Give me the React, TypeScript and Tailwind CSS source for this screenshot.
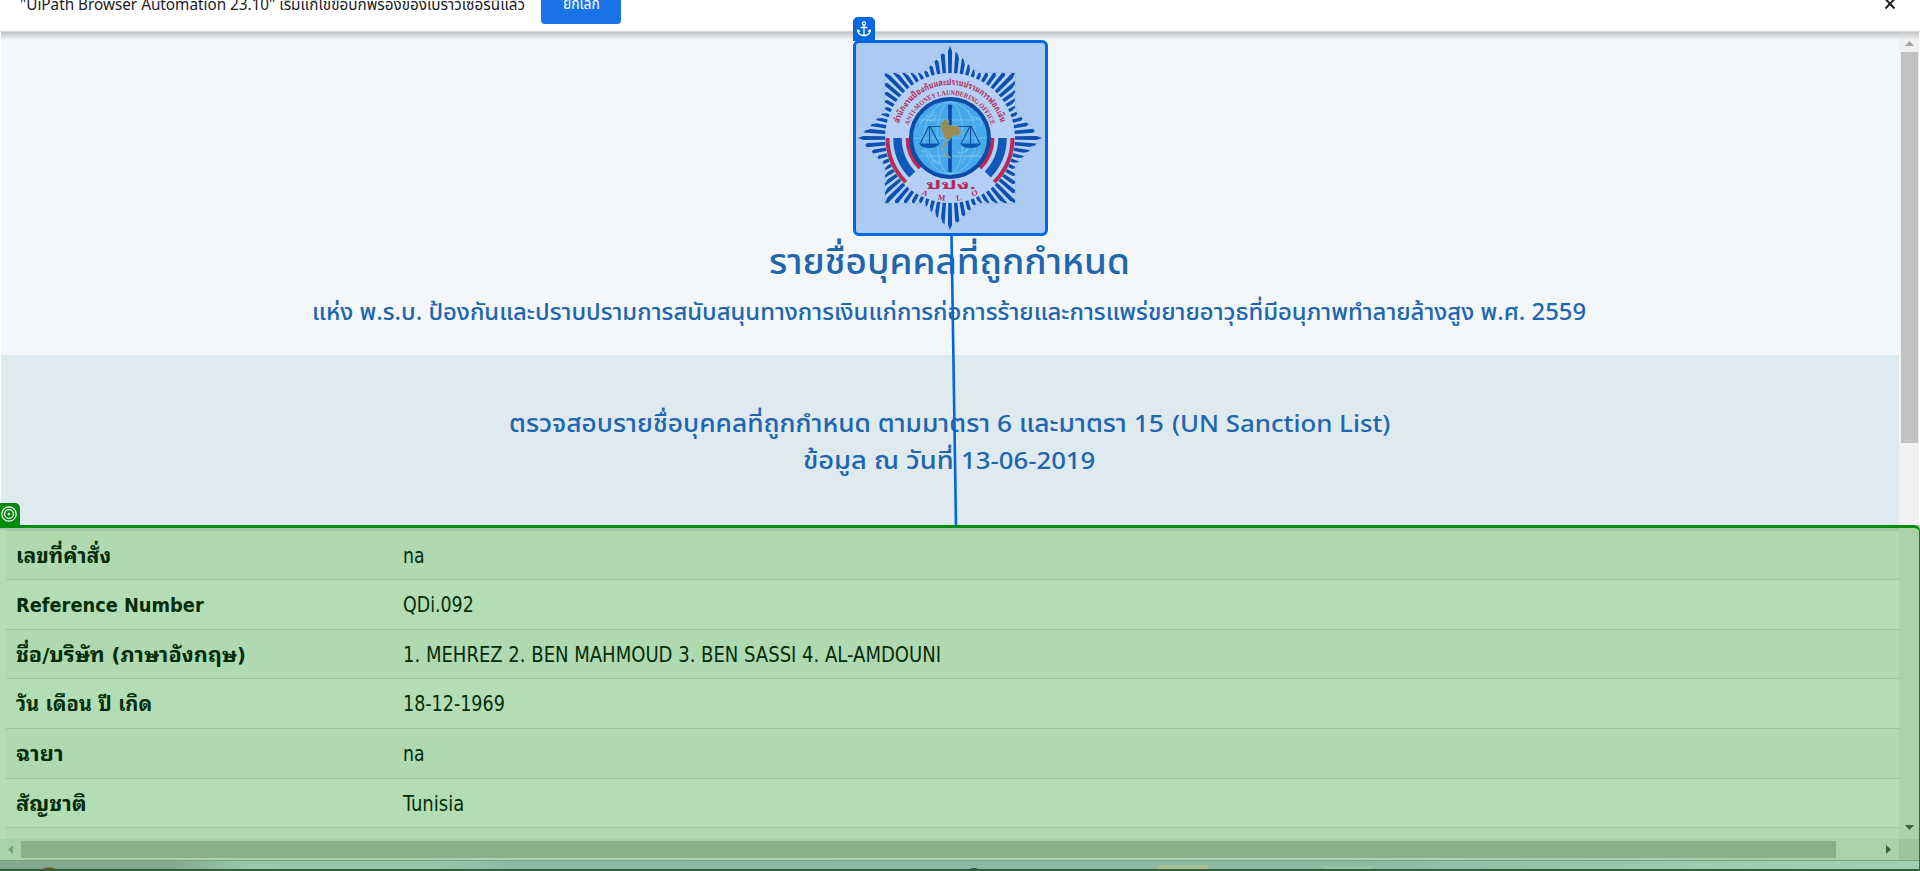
import { useLayoutEffect, useRef, useState } from "react";
import type { ReactNode } from "react";

/* Single line of text stretched horizontally to a known width. */
function Fit({ width, className = "", children }: { width: number; className?: string; children: ReactNode }) {
  const ref = useRef<HTMLSpanElement>(null);
  const [scale, setScale] = useState(1);
  useLayoutEffect(() => {
    if (ref.current) setScale(width / ref.current.offsetWidth);
  }, [width]);
  return (
    <span className={`block text-left whitespace-nowrap ${className}`} style={{ width }}>
      <span ref={ref} className="inline-block origin-left" style={{ transform: `scaleX(${scale})` }}>
        {children}
      </span>
    </span>
  );
}

const polar = (r: number, deg: number) => {
  const a = (deg * Math.PI) / 180;
  return `${(r * Math.cos(a)).toFixed(2)} ${(r * Math.sin(a)).toFixed(2)}`;
};

/* Outer edge of the star: a square laid over a diamond. */
const envelope = (deg: number) => {
  const c = Math.abs(Math.cos((deg * Math.PI) / 180));
  const s = Math.abs(Math.sin((deg * Math.PI) / 180));
  return Math.max(65 / Math.max(c, s), 92 / (c + s));
};

const rays = Array.from({ length: 72 }, (_, i) => {
  const a = i * 5;
  const axis = a % 90 === 0;
  const left = polar(envelope(a - 1.4) - (axis ? 3 : 0), a - 1.4);
  const right = polar(envelope(a + 1.4) - 3, a + 1.4);
  return `M${polar(63, a - 1.5)}L${left}L${polar(envelope(a), a)}L${right}L${polar(63, a + 1.5)}Z`;
}).join("");

const halo = Array.from({ length: 72 }, (_, i) => polar(envelope(i * 5) + 0.5, i * 5)).join("L");

const arc = (r: number, from: number, to: number) =>
  `M${polar(r, from)}A${r} ${r} 0 0 ${to > from ? 1 : 0} ${polar(r, to)}`;

function Emblem() {
  return (
    <svg viewBox="-97 -98 194 196" className="h-[196px] w-[194px] shrink-0">
      <path d={`M${halo}Z`} fill="#b5d1f5" stroke="#8fb2e4" strokeWidth="0.6" />
      <path d={rays} fill="#0d50b0" />
      <circle r="65" fill="#b4d0f6" />
      {[0, 1].map((s) => (
        <g key={s} transform={s ? "scale(-1 1)" : undefined} fill="none">
          <path d={arc(62.5, 180, 135)} stroke="#b92a56" strokeWidth="4" />
          <path d={arc(52.5, 180, 136)} stroke="#0f57b8" strokeWidth="8.5" />
          <path d={arc(42.5, 180, 135)} stroke="#b92a56" strokeWidth="4" />
        </g>
      ))}
      <circle r="39" fill="#46a9ea" stroke="#0e4ba6" strokeWidth="4" />
      <g fill="none" stroke="#79c6f3" strokeWidth="0.8">
        <ellipse rx="13" ry="36" />
        <ellipse rx="26" ry="36" />
        <path d="M-36 0H36M-31 -18H31M-31 18H31" />
        <path d="M-30 -14q5 -8 9 -4t8 -7M18 -28q2 8 8 8t5 9M-28 14q6 -4 9 4t10 8M12 25q4 -9 10 -7t8 -8M-24 -22q6 2 8 -4M8 14q6 2 10 -3M-18 24q4 -4 8 2" strokeWidth="1.4" strokeDasharray="2 1" />
      </g>
      <path d="M0 -31V34" stroke="#0e4ba6" strokeWidth="3.6" />
      <circle cy="-31" r="2.4" fill="#0e4ba6" />
      <path d="M-21 -11.500H21M-21 -12L-30 6M-20 -12L-11 6M20 -12L11 6M21 -12L30 6M-20.500 -12V6M20.500 -12V6" stroke="#12529f" strokeWidth="1.100" fill="none" />
      <path d="M-31 5.500H-10Q-13 10 -20.500 10T-31 5.500ZM31 5.500H10Q13 10 20.500 10T31 5.500Z" fill="#0e55ae" />
      <path d="M-9 -15L-5 -19L-1 -17L-2 -12L4 -13L9 -11L11 -5L8 -2L2 -2L-1 3L-4 1L-4 8L-7 10L-6 14L-2 17L1 20L-3 19L-7 14L-8 9L-5 3L-7 -4L-9 -9Z" fill="#988b55" stroke="#7fb4c8" strokeWidth="0.6" />
      <path id="arcThai" d={arc(53, 196, 345)} fill="none" />
      <path id="arcLatin" d={arc(43, 197, 344)} fill="none" />
      <path id="arcBase" d={arc(63, 117, 60)} fill="none" />
      <g fill="#b92a56" fontWeight="bold">
        <text fontSize="8.500" fontFamily="'Noto Sans Thai Looped', Loma, 'Noto Sans Thai', 'Liberation Sans', sans-serif">
          <textPath href="#arcThai" textLength="136" lengthAdjust="spacingAndGlyphs">สำนักงานป้องกันและปราบปรามการฟอกเงิน</textPath>
        </text>
        <text fontSize="7" fontFamily="'Liberation Serif', serif">
          <textPath href="#arcLatin" textLength="109" lengthAdjust="spacingAndGlyphs">ANTI-MONEY LAUNDERING OFFICE</textPath>
        </text>
        <text x="-24" y="51" fontSize="11.500" textLength="50" lengthAdjust="spacingAndGlyphs" fontFamily="'Noto Sans Thai Looped', Loma, 'Noto Sans Thai', 'Liberation Sans', sans-serif">ปปง.</text>
        <text fontSize="8" fontFamily="'Liberation Serif', serif">
          <textPath href="#arcBase" textLength="59" lengthAdjust="spacing">AMLO</textPath>
        </text>
      </g>
    </svg>
  );
}

const rows = [
  { label: "เลขที่คำสั่ง", lw: 95, value: "na", vw: 22, h: "h-[49px]" },
  { label: "Reference Number", lw: 188, value: "QDi.092", vw: 71, h: "h-[50px]" },
  { label: "ชื่อ/บริษัท (ภาษาอังกฤษ)", lw: 230, value: "1. MEHREZ 2. BEN MAHMOUD 3. BEN SASSI 4. AL-AMDOUNI", vw: 538, h: "h-[49px]" },
  { label: "วัน เดือน ปี เกิด", lw: 136, value: "18-12-1969", vw: 102, h: "h-[50px]" },
  { label: "ฉายา", lw: 47, value: "na", vw: 22, h: "h-[50px]" },
  { label: "สัญชาติ", lw: 71, value: "Tunisia", vw: 61, h: "h-[49px]" },
];

export default function App() {
  return (
    <div className="relative flex h-[871px] w-[1920px] flex-col overflow-hidden bg-white font-['Noto_Sans_Thai','Noto_Sans','Liberation_Sans',sans-serif]">
      <header className="flex h-[31px] shrink-0 items-start overflow-hidden pl-5 text-[#202124]">
        <div className="-mt-[7px] h-6 text-base leading-6">
          <Fit width={505}>"UiPath Browser Automation 23.10" เริ่มแก้ไขข้อบกพร่องของเบราว์เซอร์นี้แล้ว</Fit>
        </div>
        <div className="-mt-2 ml-4 flex h-8 w-20 justify-center rounded bg-[#1a73e8] text-[15px] leading-[26px] text-white">
          <Fit width={37}>ยกเลิก</Fit>
        </div>
        <svg viewBox="0 0 10 12" className="-mt-0.5 mr-[25px] ml-auto h-3 w-2.5">
          <path d="M0.500 1L9.500 10.500M9.500 1L0.500 10.500" stroke="#1f2023" strokeWidth="2" />
        </svg>
      </header>

      <div className="flex h-[494px] shrink-0 border-t border-[#d5d7da] pl-px">
        <main className="flex w-[1898px] flex-col text-[#2065ae]">
          <section className="flex h-[323px] flex-col items-center bg-[#f3f7fa]">
            <div className="h-2 w-full shrink-0 bg-linear-to-b from-[#bfc3c7] to-[#f3f7fa]" />
            <div className="flex h-[196px] w-[195px] shrink-0 items-center justify-center overflow-hidden rounded-md border-[3px] border-[#0067df] bg-[#abcbf2]">
              <Emblem />
            </div>
            <h1 className="mt-1 -ml-0.5 text-[35px] leading-[48px] font-medium">
              <Fit width={361}>รายชื่อบุคคลที่ถูกกำหนด</Fit>
            </h1>
            <h2 className="mt-[7px] -ml-0.5 text-[23px] leading-9 font-medium">
              <Fit width={1274}>แห่ง พ.ร.บ. ป้องกันและปราบปรามการสนับสนุนทางการเงินแก่การก่อการร้ายและการแพร่ขยายอาวุธที่มีอนุภาพทำลายล้างสูง พ.ศ. 2559</Fit>
            </h2>
          </section>
          <section className="flex h-[170px] flex-col items-center bg-[#dfeaf0] pt-[52px] pr-0.5 text-2xl leading-[37px] font-medium">
            <div className="flex gap-2">
              <Fit width={655}>ตรวจสอบรายชื่อบุคคลที่ถูกกำหนด ตามมาตรา 6 และมาตรา 15</Fit>
              <Fit width={218}>(UN Sanction List)</Fit>
            </div>
            <div className="flex gap-2">
              <Fit width={150}>ข้อมูล ณ วันที่</Fit>
              <Fit width={134}>13-06-2019</Fit>
            </div>
          </section>
        </main>
        <aside className="flex w-5 flex-col items-center bg-[#f1f1f1]">
          <div className="flex h-5 w-full items-center justify-center bg-linear-to-b from-[#c5c6c8] to-[#f1f1f1] to-40%">
            <svg viewBox="0 0 9 5" className="mt-0.5 h-[5px] w-[9px]"><path d="M0 5L4.500 0L9 5Z" fill="#a3a3a3" /></svg>
          </div>
          <div className="h-[391px] w-[17px] bg-[#c1c1c1]" />
        </aside>
      </div>

      <div className="flex h-[314px] shrink-0">
        <div className="flex w-[1899px] flex-col bg-[#b3deb5] text-[#032d08]">
          <div className="h-[5px] w-full shrink-0 bg-[#a0c9a9]" />
          <div className="ml-1.5 flex flex-col border-t border-[#9dc79f] font-['DejaVu_Sans_Condensed','DejaVu_Sans','Noto_Sans_Thai_Looped',Loma,'Noto_Sans_Thai',sans-serif]">
            {rows.map((r, i) => (
              <div key={r.label} className={`flex items-center border-b border-[#9cc59e] pt-px ${r.h} ${i % 2 ? "bg-[#b3deb5]" : "bg-[#afd9b1]"}`}>
                <div className="w-[387px] shrink-0 pl-2.5 text-xl leading-7 font-bold">
                  <Fit width={r.lw}>{r.label}</Fit>
                </div>
                <div className="pl-2.5 text-[21px] leading-7">
                  <Fit width={r.vw}>{r.value}</Fit>
                </div>
              </div>
            ))}
            <div className="h-[11px] bg-[#afd9b1]" />
          </div>
        </div>
        <div className="flex w-[21px] flex-col items-center justify-end bg-[#a8d3aa] pr-px pb-[9px]">
          <svg viewBox="0 0 9 5" className="h-[5px] w-[9px]"><path d="M0 0H9L4.500 5Z" fill="#386338" /></svg>
        </div>
      </div>

      <div className="flex h-[21px] shrink-0 items-center bg-[#a8d3aa] pl-2">
        <svg viewBox="0 0 5 9" className="h-[9px] w-[5px]"><path d="M5 0V9L0 4.500Z" fill="#74a077" /></svg>
        <div className="ml-2 h-[17px] w-[1815px] bg-[#89b08b]" />
        <svg viewBox="0 0 5 9" className="ml-[50px] h-[9px] w-[5px]"><path d="M0 0V9L5 4.500Z" fill="#386338" /></svg>
        <div className="ml-auto h-full w-[21px] bg-[#9bc49d]" />
      </div>

      <footer className="h-[11px] shrink-0 border-t border-b-2 border-t-[#75a083] border-b-[#2f6039]">
        <svg viewBox="0 0 1920 8" className="h-2 w-[1920px]">
          <defs>
            <linearGradient id="bar">
              <stop offset="0" stopColor="#82aa8e" /><stop offset=".09" stopColor="#82aa8e" /><stop offset=".13" stopColor="#99c9a8" />
              <stop offset=".22" stopColor="#99c7aa" /><stop offset=".27" stopColor="#8ab9a2" /><stop offset=".7" stopColor="#8db8a0" />
              <stop offset=".9" stopColor="#9dceb0" /><stop offset="1" stopColor="#a0d1b2" />
            </linearGradient>
          </defs>
          <rect width="1920" height="8" fill="url(#bar)" />
          <ellipse cx="49" cy="11" rx="9" ry="4.500" fill="#6c5520" />
          <rect x="1158" y="4" width="50" height="8" rx="3" fill="#a6bf93" />
          <rect x="1324" y="5" width="48" height="8" rx="3" fill="#96c5a0" />
          <ellipse cx="974" cy="10" rx="6" ry="3" fill="#0d5050" />
        </svg>
      </footer>

      {/* Selection overlays */}
      <div className="absolute top-[525px] -left-2 h-[356px] w-[1928px] rounded-tr-md border-t-3 border-r border-[#058a10]" />
      <div className="absolute top-[503px] left-0 flex h-[22px] w-5 items-center rounded-tr-[5px] bg-[#058a10] pl-px">
        <svg viewBox="-8 -8 16 16" className="h-4 w-4" fill="none" stroke="#fff" strokeWidth="1.200">
          <circle r="7.200" /><circle r="4.400" /><circle r="1.300" fill="#fff" stroke="none" />
        </svg>
      </div>
      <div className="absolute top-[17px] left-[853px] flex h-[24px] w-[22px] items-center justify-center rounded-t-[5px] bg-[#0067df]">
        <svg viewBox="0 0 14 16" className="h-4 w-3.5" fill="none" stroke="#fff" strokeWidth="1.300">
          <circle cx="7" cy="2.500" r="1.600" />
          <path d="M7 4V14.500M3.500 6.500H10.500M1 9V10.500Q2 14.500 7 14.500T13 10.500V9M0.200 11L1 9L3 10.500M13.800 11L13 9L11 10.500" />
        </svg>
      </div>
      <svg viewBox="0 0 10 290" className="absolute top-[235px] left-[949px] h-[290px] w-2.5">
        <path d="M2.500 0L7 290" stroke="#0067df" strokeWidth="2.600" />
      </svg>
    </div>
  );
}
